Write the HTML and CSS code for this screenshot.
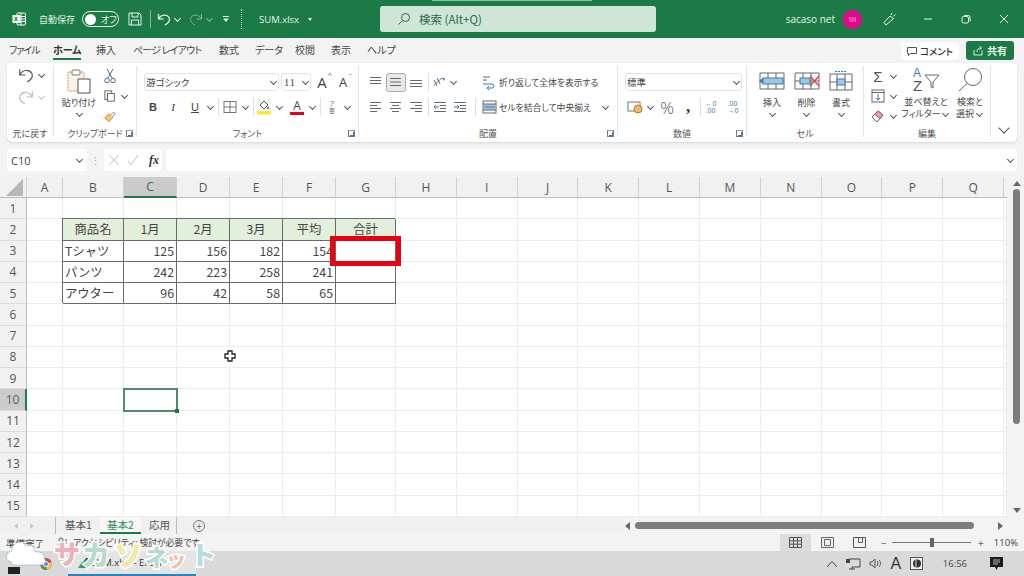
FILE: index.html
```html
<!DOCTYPE html>
<html lang="ja">
<head>
<meta charset="utf-8">
<title>SUM.xlsx - Excel</title>
<link rel="stylesheet" href="styles.css">
</head>
<body>
<div class="app">
  <header class="titlebar">
    <svg class="t-xl" width="14" height="14" viewBox="0 0 14 14"><rect x="5" y="1" width="8.5" height="12" rx="1" fill="none" stroke="#fff"/><path d="M5 4.5h8.5M5 7h8.5M5 9.5h8.5M9 1v12" stroke="#fff"/><rect x="0.5" y="3" width="7.5" height="8" fill="#fff"/><path d="M2.5 5l3 4M5.5 5l-3 4" stroke="#1b7a45" stroke-width="1.2"/></svg>
    <span class="t-auto">自動保存</span>
    <span class="toggle"><b></b><em>オフ</em></span>
    <svg class="t-save" width="14" height="14" viewBox="0 0 14 14" fill="none" stroke="#e8f3ec"><path d="M1 1h10l2 2v10H1z"/><path d="M4 1v4h6V1M3.500 13V8h7v5"/></svg>
    <span class="t-sep"></span>
    <svg class="t-undo" width="14" height="14" viewBox="0 0 14 14" fill="none" stroke="#fff" stroke-width="1.2"><path d="M1.500 2v5h5M1.800 6.800C4 2 10 2 12 5.500c1.300 2.500-.5 5.500-4 7.500"/></svg>
    <span class="car s12 light"></span>
    <svg class="t-redo" width="14" height="14" viewBox="0 0 14 14" fill="none" stroke="#7fb698"><path d="M12.500 2v5h-5M12.200 6.800C10 2 4 2 2 5.500c-1.300 2.500.5 5.500 4 7.500"/></svg>
    <span class="car s12 dim"></span>
    <svg class="t-cust" width="8" height="8" viewBox="0 0 8 8" fill="#e8f3ec"><path d="M1 1h6v1H1zM1 3.500h6L4 7z"/></svg>
    <span class="t-dots"></span>
    <span class="t-file">SUM.xlsx</span>
    <span class="t-filecar"></span>
    <div class="searchbox">
      <svg width="14" height="14" viewBox="0 0 14 14" fill="none" stroke="#2d6a49"><circle cx="8.500" cy="5.500" r="4"/><path d="M5.500 8.500L1.500 12.500"/></svg>
      <span>検索 (Alt+Q)</span>
    </div>
    <div class="t-right">
      <span class="t-user">sacaso net</span>
      <span class="avatar">SN</span>
      <svg class="t-pen" width="14" height="14" viewBox="0 0 14 14" fill="none" stroke="#e8f3ec"><path d="M3 13L1 10.500 7 4l3.500 2.500zM8 3l1-2M10.500 4l2-1.500"/></svg>
      <svg class="t-win" width="10" height="10" viewBox="0 0 10 10" stroke="#e8f3ec" fill="none"><path d="M1 5h8"/></svg>
      <svg class="t-win" width="10" height="10" viewBox="0 0 10 10" stroke="#e8f3ec" fill="none"><rect x="1" y="2.500" width="6.500" height="6.500" rx="1.500"/><path d="M3 1.500h4.500a1.500 1.500 0 0 1 1.500 1.500v4.500"/></svg>
      <svg class="t-win" width="10" height="10" viewBox="0 0 10 10" stroke="#e8f3ec" fill="none"><path d="M1 1l8 8M9 1L1 9"/></svg>
    </div>
  </header>

  <nav class="tabs">
    <span class="tab t1">ファイル</span>
    <span class="tab t2 on">ホーム</span>
    <span class="tab t3">挿入</span>
    <span class="tab t4">ページ レイアウト</span>
    <span class="tab t5">数式</span>
    <span class="tab t6">データ</span>
    <span class="tab t7">校閲</span>
    <span class="tab t8">表示</span>
    <span class="tab t9">ヘルプ</span>
    <span class="btn-comment"><svg width="10" height="10" viewBox="0 0 10 10" fill="none" stroke="#555"><path d="M.5 1.500h9v6h-6L1.500 9.500v-2h-1z"/></svg>コメント</span>
    <span class="btn-share"><svg width="11" height="11" viewBox="0 0 11 11" fill="none" stroke="#d8efe1"><path d="M1 5v5h8V5M4 7c0-3 2-4 4-4M6.500 1L8.500 3 6.500 5"/></svg>共有</span>
  </nav>

  <section class="ribbon">
    <div class="grp g1">
      <div class="undo-col">
        <div class="row"><svg class="s16" width="16" height="16" viewBox="0 0 14 14" fill="none" stroke="#555"><path d="M1.500 2v5h5M1.800 6.800C4 2 10 2 12 5.500c1.300 2.500-.5 5.500-4 7.500"/></svg><span class="car s14"></span></div>
        <div class="row"><svg class="s16" width="16" height="16" viewBox="0 0 14 14" fill="none" stroke="#bbb"><path d="M12.500 2v5h-5M12.200 6.800C10 2 4 2 2 5.500c-1.300 2.500.5 5.500 4 7.500"/></svg><span class="car s14 dim2"></span></div>
      </div>
      <span class="glabel">元に戻す</span>
    </div>

    <div class="grp g2">
      <div class="cols">
        <div class="bigcol w50 up4">
          <svg width="24" height="25" viewBox="0 0 24 25"><rect x="1" y="3" width="16" height="19" rx="1" fill="#fdf3e6" stroke="#d98e3e" stroke-dasharray="2 1"/><rect x="5" y="1" width="8" height="5" rx="1" fill="#fff" stroke="#777"/><rect x="11" y="10" width="12" height="14" fill="#fff" stroke="#555"/></svg>
          <span class="btxt mt3">貼り付け</span>
          <span class="car h8"></span>
        </div>
        <div class="smallcol">
          <div class="row r20"><svg class="s12" width="12" height="16" viewBox="0 0 12 16" fill="none" stroke="#4a6d8a"><path d="M3 1l5 9M9 1L4 10"/><circle cx="3" cy="12.500" r="2.300"/><circle cx="9" cy="12.500" r="2.300"/></svg></div>
          <div class="row r20"><svg class="s12" width="14" height="14" viewBox="0 0 14 14" fill="#fff" stroke="#555"><rect x="1" y="1" width="8" height="10"/><rect x="4" y="4" width="8" height="9"/></svg><span class="car s16"></span></div>
          <div class="row r20"><svg class="s12" width="15" height="15" viewBox="0 0 15 15"><path d="M1 9l5-5 5 5-5 5z" fill="#f5c46b" stroke="#c47a1e"/><path d="M8 6l4-4 2 2-4 4" fill="#fff" stroke="#666"/></svg></div>
        </div>
      </div>
      <span class="glabel">クリップボード</span>
      <span class="launch"></span>
    </div>

    <div class="grp g3">
      <div class="rows">
        <div class="row">
          <span class="select w135"><span>游ゴシック</span><span class="car s8"></span></span>
          <span class="select w30 ml2"><span class="latin">11</span><span class="car s8"></span></span>
          <span class="slot s22 gl-a big">A<sup class="up">^</sup></span>
          <span class="slot s20 gl-a">A<sup class="dn">ˇ</sup></span>
        </div>
        <div class="row">
          <span class="slot s18 gl-b">B</span>
          <span class="slot s22 gl-i">I</span>
          <span class="slot s22 gl-u">U</span>
          <span class="car s8"></span>
          <span class="sep s8"></span>
          <svg class="s16" width="16" height="14" viewBox="0 0 16 14" fill="none" stroke="#777"><rect x="2" y="1.500" width="12" height="11"/><path d="M8 1.500v11M2 7h12"/></svg>
          <span class="car s14"></span>
          <span class="sep s2"></span>
          <svg class="s20" width="20" height="16" viewBox="0 0 20 16"><path d="M6 6l4-4 4 4-4 4z" fill="#fff" stroke="#555"/><path d="M14 7l1.500 3-3 0z" fill="#4a7ba6"/><rect x="3" y="12" width="14" height="3.500" fill="#ffe92e"/></svg>
          <span class="car s10"></span>
          <span class="slot s26 gl-fc">A</span>
          <span class="car s4"></span>
          <span class="sep s12"></span>
          <span class="slot s12 gl-ruby">ア<br>亜</span>
          <span class="car s18"></span>
        </div>
      </div>
      <span class="glabel">フォント</span>
      <span class="launch"></span>
    </div>

    <div class="grp g4">
      <div class="rows">
        <div class="row">
          <svg class="s19" width="19" height="14" viewBox="0 0 19 14" stroke="#666"><path d="M4 2.500h11M4 5.500h11M4 8.500h11"/></svg>
          <span class="slot s21"><span class="pressed"><svg width="15" height="10" viewBox="0 0 15 10" stroke="#666"><path d="M2 1.500h11M2 5h11M2 8.500h11"/></svg></span></span>
          <svg class="s20" width="20" height="14" viewBox="0 0 20 14" stroke="#666"><path d="M4 5.500h12M4 8.500h12M4 11.500h12"/></svg>
          <span class="sep s4"></span>
          <svg class="s20" width="20" height="14" viewBox="0 0 20 14" fill="none"><path d="M4 10L12 3" stroke="#4a7ba6"/><path d="M4 5l3 6M7 3l3 6" stroke="#666"/><path d="M12 3l3 0-1 3z" fill="#4a7ba6"/></svg>
          <span class="car s6"></span>
          <span class="sp24"></span>
          <svg class="s19" width="19" height="15" viewBox="0 0 19 15" fill="none"><path d="M3 2h7M3 5h4" stroke="#666"/><path d="M3 9h9a2 2 0 0 1 0 4H8M9 11l-2 2 2 2" stroke="#3a7bb0"/></svg>
          <span class="rtxt">折り返して全体を表示する</span>
        </div>
        <div class="row">
          <svg class="s19" width="19" height="14" viewBox="0 0 19 14" stroke="#666"><path d="M4 2.500h11M4 5.500h7M4 8.500h11M4 11.500h7"/></svg>
          <svg class="s21" width="21" height="14" viewBox="0 0 21 14" stroke="#666"><path d="M5 2.500h11M7 5.500h7M5 8.500h11M7 11.500h7"/></svg>
          <svg class="s20" width="20" height="14" viewBox="0 0 20 14" stroke="#666"><path d="M4 2.500h12M9 5.500h7M4 8.500h12M9 11.500h7"/></svg>
          <span class="sep s4"></span>
          <svg class="s20" width="20" height="14" viewBox="0 0 20 14" fill="none"><path d="M4 2.500h12M10 5.500h6M10 8.500h6M4 11.500h12" stroke="#666"/><path d="M9 7H4M6 5L4 7l2 2" stroke="#3a7bb0"/></svg>
          <svg class="s21" width="21" height="14" viewBox="0 0 21 14" fill="none"><path d="M4 2.500h12M10 5.500h6M10 8.500h6M4 11.500h12" stroke="#666"/><path d="M4 7h5M7 5l2 2-2 2" stroke="#3a7bb0"/></svg>
          <span class="sep s9"></span>
          <svg class="s19" width="19" height="14" viewBox="0 0 19 14"><rect x="3" y="1" width="13" height="12" fill="#fff" stroke="#666"/><rect x="4" y="4" width="11" height="6" fill="#9cc7e6"/><path d="M4 7h11" stroke="#3a7bb0"/><path d="M3 4h13M3 10h13" stroke="#666"/></svg>
          <span class="rtxt">セルを結合して中央揃え</span>
          <span class="car s24"></span>
        </div>
      </div>
      <span class="glabel">配置</span>
      <span class="launch"></span>
    </div>

    <div class="grp g5">
      <div class="rows">
        <div class="row"><span class="select w117"><span>標準</span><span class="car s8"></span></span></div>
        <div class="row">
          <svg class="s20" width="20" height="14" viewBox="0 0 20 14"><rect x="3" y="2" width="12" height="9" fill="#fff" stroke="#777"/><circle cx="13" cy="9" r="4" fill="#f2b56b" stroke="#c47a1e"/></svg>
          <span class="car s10"></span>
          <span class="slot s24 gl-pc">%</span>
          <span class="slot s18 gl-cm">,</span>
          <span class="sep s6"></span>
          <span class="slot s16 gl-dec">←0<br>.00</span>
          <span class="slot s28 gl-dec">.00<br>→0</span>
        </div>
      </div>
      <span class="glabel">数値</span>
      <span class="launch"></span>
    </div>

    <div class="grp g6">
      <div class="cols">
        <div class="bigcol w34 up2">
          <svg width="26" height="20" viewBox="0 0 26 20" fill="none"><path d="M1 2h24v16H1zM1 10h24M9 2v16M17 2v16" stroke="#666"/><rect x="4" y="7" width="20" height="6" fill="#9cc7e6" stroke="#3a7bb0"/><path d="M0 10l4-3v6z" fill="#3a7bb0"/></svg>
          <span class="btxt mt6">挿入</span><span class="car h8"></span>
        </div>
        <div class="bigcol w35 up2">
          <svg width="26" height="20" viewBox="0 0 26 20" fill="none"><path d="M1 2h24v16H1zM1 10h24M9 2v16M17 2v16" stroke="#666"/><rect x="6" y="7" width="10" height="6" fill="#9cc7e6" stroke="#3a7bb0"/><path d="M16 5l9 10M25 5l-9 10" stroke="#d8413a" stroke-width="1.300"/></svg>
          <span class="btxt mt6">削除</span><span class="car h8"></span>
        </div>
        <div class="bigcol w34 up2">
          <svg width="24" height="20" viewBox="0 0 24 20" fill="none"><path d="M1 3h22v16H1zM1 11h22M8 3v16M16 3v16" stroke="#666"/><rect x="8" y="8" width="8" height="6" fill="#9cc7e6" stroke="#3a7bb0"/><path d="M6 0.500h12" stroke="#3a7bb0" stroke-dasharray="2 1"/></svg>
          <span class="btxt mt6">書式</span><span class="car h8"></span>
        </div>
      </div>
      <span class="glabel">セル</span>
    </div>

    <div class="grp g7">
      <div class="cols">
        <div class="smallcol">
          <div class="row r20"><span class="slot s14 gl-sum">Σ</span><span class="car s16"></span></div>
          <div class="row r20"><svg class="s14" width="14" height="14" viewBox="0 0 14 14" fill="none"><rect x="1" y="1" width="12" height="12" stroke="#666"/><path d="M1 3.500h12" stroke="#666"/><path d="M7 5v6M5 9l2 2 2-2" stroke="#3a7bb0"/></svg><span class="car s16"></span></div>
          <div class="row r20"><svg class="s14" width="14" height="14" viewBox="0 0 14 14"><path d="M1 8l6-6 5 4-6 7z" fill="#fff" stroke="#666"/><path d="M4 5.500l3-3.500 5 4-3 3.500z" fill="#e89ac0" stroke="#b0447e"/></svg><span class="car s16"></span></div>
        </div>
        <div class="bigcol w50 up8">
          <svg width="32" height="28" viewBox="0 0 32 28" fill="none"><text x="3" y="12" class="sort-a">A</text><text x="3" y="26" class="sort-z">Z</text><path d="M15 10h14l-6 7v6l-2-1v-5z" stroke="#666"/></svg>
          <span class="btxt mt3">並べ替えと</span>
          <span class="btxt">フィルター<i class="car s10"></i></span>
        </div>
        <div class="bigcol w38 up8">
          <svg width="28" height="28" viewBox="0 0 28 28" fill="none" stroke="#666"><circle cx="17" cy="12" r="8.500"/><path d="M11 18.500L3 26"/></svg>
          <span class="btxt mt3">検索と</span>
          <span class="btxt">選択<i class="car s10"></i></span>
        </div>
      </div>
      <span class="glabel">編集</span>
    </div>
    <div class="g8"><span class="car big-car"></span></div>
  </section>

  <div class="fbar">
    <div class="namebox"><span>C10</span><span class="car s8"></span></div>
    <span class="fdots">⋮</span>
    <div class="fxbox">
      <svg width="12" height="12" viewBox="0 0 12 12" stroke="#c4c4c4" fill="none"><path d="M1 1l10 10M11 1L1 11"/></svg>
      <svg width="12" height="12" viewBox="0 0 12 12" stroke="#c4c4c4" fill="none"><path d="M1 7l3 4 7-10"/></svg>
      <span>fx</span>
    </div>
    <div class="finput"><span class="car s8"></span></div>
  </div>

  <main class="sheetwrap">
    <div class="sheet">
      <span class="hd corner"><svg width="18" height="17" viewBox="0 0 18 17"><path d="M17 0v17H0z" fill="#b7b7b7"/></svg></span><span class="hd">A</span><span class="hd">B</span><span class="hd hsel">C</span><span class="hd">D</span><span class="hd">E</span><span class="hd">F</span><span class="hd">G</span><span class="hd">H</span><span class="hd">I</span><span class="hd">J</span><span class="hd">K</span><span class="hd">L</span><span class="hd">M</span><span class="hd">N</span><span class="hd">O</span><span class="hd">P</span><span class="hd">Q</span><span class="hd end"></span>

      <span class="rh">1</span><span></span><span></span><span></span><span></span><span></span><span></span><span></span><span></span><span></span><span></span><span></span><span></span><span></span><span></span><span></span><span></span><span></span><span></span>

      <span class="rh">2</span><span></span><span class="t th">商品名</span><span class="t th">1月</span><span class="t th">2月</span><span class="t th">3月</span><span class="t th">平均</span><span class="t th">合計</span><span></span><span></span><span></span><span></span><span></span><span></span><span></span><span></span><span></span><span></span><span></span>

      <span class="rh">3</span><span></span><span class="t">Tシャツ</span><span class="t n">125</span><span class="t n">156</span><span class="t n">182</span><span class="t n">154</span><span class="t"></span><span></span><span></span><span></span><span></span><span></span><span></span><span></span><span></span><span></span><span></span><span></span>

      <span class="rh">4</span><span></span><span class="t">パンツ</span><span class="t n">242</span><span class="t n">223</span><span class="t n">258</span><span class="t n">241</span><span class="t"></span><span></span><span></span><span></span><span></span><span></span><span></span><span></span><span></span><span></span><span></span><span></span>

      <span class="rh">5</span><span></span><span class="t">アウター</span><span class="t n">96</span><span class="t n">42</span><span class="t n">58</span><span class="t n">65</span><span class="t"></span><span></span><span></span><span></span><span></span><span></span><span></span><span></span><span></span><span></span><span></span><span></span>

      <span class="rh">6</span><span></span><span></span><span></span><span></span><span></span><span></span><span></span><span></span><span></span><span></span><span></span><span></span><span></span><span></span><span></span><span></span><span></span><span></span>

      <span class="rh">7</span><span></span><span></span><span></span><span></span><span></span><span></span><span></span><span></span><span></span><span></span><span></span><span></span><span></span><span></span><span></span><span></span><span></span><span></span>

      <span class="rh">8</span><span></span><span></span><span></span><span></span><span></span><span></span><span></span><span></span><span></span><span></span><span></span><span></span><span></span><span></span><span></span><span></span><span></span><span></span>

      <span class="rh">9</span><span></span><span></span><span></span><span></span><span></span><span></span><span></span><span></span><span></span><span></span><span></span><span></span><span></span><span></span><span></span><span></span><span></span><span></span>

      <span class="rh rsel">10</span><span></span><span></span><span class="sel"></span><span></span><span></span><span></span><span></span><span></span><span></span><span></span><span></span><span></span><span></span><span></span><span></span><span></span><span></span><span></span>

      <span class="rh">11</span><span></span><span></span><span></span><span></span><span></span><span></span><span></span><span></span><span></span><span></span><span></span><span></span><span></span><span></span><span></span><span></span><span></span><span></span>

      <span class="rh">12</span><span></span><span></span><span></span><span></span><span></span><span></span><span></span><span></span><span></span><span></span><span></span><span></span><span></span><span></span><span></span><span></span><span></span><span></span>

      <span class="rh">13</span><span></span><span></span><span></span><span></span><span></span><span></span><span></span><span></span><span></span><span></span><span></span><span></span><span></span><span></span><span></span><span></span><span></span><span></span>

      <span class="rh">14</span><span></span><span></span><span></span><span></span><span></span><span></span><span></span><span></span><span></span><span></span><span></span><span></span><span></span><span></span><span></span><span></span><span></span><span></span>

      <span class="rh">15</span><span></span><span></span><span></span><span></span><span></span><span></span><span></span><span></span><span></span><span></span><span></span><span></span><span></span><span></span><span></span><span></span><span></span><span></span>
    </div>
    <div class="vscroll"><span class="arr-up"></span><span class="vthumb"></span><span class="arr-dn"></span></div>
    <div class="redbox"></div>
    <svg class="cursor" width="12" height="12" viewBox="0 0 12 12"><path d="M4 1h4v3h3v4H8v3H4V8H1V4h3z" fill="#fff" stroke="#222" stroke-width="1.300"/></svg>
  </main>

  <div class="sheettabs">
    <span class="navarrow l"></span><span class="navarrow r"></span>
    <span class="stab first">基本1</span>
    <span class="stab active">基本2</span>
    <span class="stab last">応用</span>
    <span class="addsheet">+</span>
    <div class="hscroll"><span class="arr-l"></span><span class="hthumb"></span><span class="arr-r"></span></div>
  </div>

  <footer class="status">
    <span class="st-ready">準備完了</span>
    <svg class="st-icon" width="12" height="12" viewBox="0 0 12 12" fill="none" stroke="#555"><circle cx="4" cy="3" r="2"/><path d="M1 8c1-2 5-2 6 0M3 8v3M5 8v3"/><path d="M9 2v5M9 9v1" stroke="#555"/></svg>
    <span class="st-acc">アクセシビリティ: 検討が必要です</span>
    <div class="st-right">
      <span class="view on"><svg width="13" height="11" viewBox="0 0 13 11" fill="none" stroke="#555"><path d="M.5.500h12v10H.5zM.5 3.800h12M.5 7.200h12M4.500.500v10M8.500.500v10"/></svg></span>
      <span class="view"><svg width="13" height="11" viewBox="0 0 13 11" fill="none" stroke="#666"><path d="M.5.500h12v10H.5z"/><path d="M3.500 2.500h6v6h-6z"/></svg></span>
      <span class="view"><svg width="13" height="11" viewBox="0 0 13 11" fill="none" stroke="#555"><path d="M.5.500h12v10H.5zM5.500.500v5h4v-5"/></svg></span>
      <span class="zm">−</span>
      <span class="slider"><b></b></span>
      <span class="zm">+</span>
      <span class="zoompc">110%</span>
    </div>
  </footer>

  <div class="taskbar">
    <span class="task-start"></span>
    <svg class="task-chrome" width="12" height="12" viewBox="0 0 12 12"><circle cx="6" cy="6" r="6" fill="#d9463c"/><path d="M6 6L1 9a6 6 0 0 0 6 3z" fill="#3aa757"/><path d="M6 6l5.500-2A6 6 0 0 1 7 12z" fill="#f6c344"/><circle cx="6" cy="6" r="2.500" fill="#4a8be0" stroke="#fff"/></svg>
    <div class="task-item">
      <svg width="10" height="11" viewBox="0 0 10 11"><path d="M1 11L8 1l2 0v10z" fill="#1e6d41"/><path d="M0 11l4-6 3 6z" fill="#3f9b66"/></svg>
      <span>SUM.xlsx - Excel</span>
    </div>
    <div class="tray">
      <svg width="12" height="8" viewBox="0 0 12 8" fill="none" stroke="#444"><path d="M1 7l5-5.500L11 7"/></svg>
      <svg width="15" height="12" viewBox="0 0 15 12" fill="none" stroke="#444"><path d="M3 1h11v8H6M3 11h6M6 9v2"/><rect x="0.500" y="1.500" width="3" height="3" fill="#444"/></svg>
      <svg width="13" height="11" viewBox="0 0 13 11" fill="none" stroke="#555"><path d="M1 4h2l3-3v9L3 7H1zM8 3c1 1 1 4 0 5M10 2c2 2 2 5 0 7"/></svg>
      <span class="tray-a">A</span>
      <svg width="13" height="13" viewBox="0 0 13 13"><rect x=".5" y=".5" width="12" height="12" fill="#eee" stroke="#555"/><circle cx="7" cy="6.500" r="4" fill="#333"/><path d="M6 3v7" stroke="#ddd"/></svg>
      <span class="clock">16:56</span>
      <svg width="13" height="14" viewBox="0 0 13 14"><path d="M0 0h13v10H8l-1.500 3L5 10H0z" fill="#1c1c1c"/><path d="M3 3h7M3 5h7M3 7h5" stroke="#ddd" stroke-width=".8"/></svg>
    </div>
  </div>

  <div class="wm">
    <svg class="wm-cloud" width="44" height="34" viewBox="0 0 44 34"><path d="M6 25C0 24 0 15 7 14 6 5 18 2 21 9c5-2 9 1 9 6 6-1 10 3 9 6 3 3 1 7-3 7H9c-2 0-3-1-3-3z" fill="#fff" stroke="#7fb7dc" stroke-dasharray="1.500 1"/></svg>
    <span class="wm-c c1">サ</span>
    <span class="wm-c c2">カ</span>
    <span class="wm-c c3">ソ</span>
    <span class="wm-c c4">ネ</span>
    <span class="wm-c c5">ッ</span>
    <span class="wm-c c6">ト</span>
  </div>

  <span class="topline"></span>
</div>
</body>
</html>
```

FILE: styles.css
```css
* { box-sizing: border-box; }
html, body { margin: 0; padding: 0; }
body {
  width: 1024px; height: 576px; overflow: hidden;
  font-family: "Noto Sans CJK JP", "Noto Sans", sans-serif;
  font-feature-settings: "palt";
  color: #444;
  background: #f3f3f3;
}
.app { position: relative; width: 1024px; height: 576px; display: flex; flex-direction: column; overflow: hidden; }
svg { display: block; flex: none; }

/* title bar */
.titlebar { height: 38px; flex: none; background: #1b7a45; display: flex; align-items: center; color: #e6f2ea; padding-left: 12px; }
.t-auto { margin-left: 13px; width: 38px; font-size: 9px; white-space: nowrap; }
.toggle { margin-left: 5px; width: 37px; height: 16px; border: 1px solid #e6f2ea; border-radius: 8px; display: flex; align-items: center; padding-left: 2px; font-size: 9px; }
.toggle b { width: 11px; height: 11px; border-radius: 50%; background: #fff; }
.toggle em { font-style: normal; margin-left: 5px; }
.t-save { margin-left: 9px; }
.t-sep { width: 1px; height: 18px; background: #7fb698; margin: 0 6px 0 8px; }
.t-redo { margin-left: 6px; }
.t-cust { margin-left: 7px; }
.t-dots { width: 0; height: 20px; border-left: 1px dotted #b7d7c4; margin-left: 11px; }
.t-file { margin-left: 17px; font-family: "Open Sans", sans-serif; font-size: 9.500px; width: 43px; white-space: nowrap; }
.t-filecar { margin-left: 6px; border: 2.500px solid transparent; border-top: 3px solid #e6f2ea; border-bottom: 0; }
.searchbox { margin-left: 68px; width: 276px; height: 26px; border-radius: 3px; background: #cfe5d8; display: flex; align-items: center; padding-left: 17px; font-size: 11.500px; color: #2d6a49; gap: 8px; }
.t-right { margin-left: auto; display: flex; align-items: center; padding-right: 15px; }
.t-user { font-family: "Open Sans", sans-serif; font-size: 10px; color: #e6f2ea; }
.avatar { margin-left: 8px; width: 19px; height: 19px; border-radius: 50%; background: #e2068c; color: #f7b5dc; font-size: 6px; display: flex; align-items: center; justify-content: center; }
.t-pen { margin-left: 21px; }
.t-win { margin-left: 28px; }
.t-pen + .t-win { margin-left: 26px; }
.topline { position: absolute; left: 432px; top: 0; width: 160px; height: 1px; background: #8fc0a4; }

/* tabs */
.tabs { height: 25px; flex: none; display: flex; align-items: center; font-size: 10px; color: #444; position: relative; padding-left: 9px; }
.tab { white-space: nowrap; height: 25px; line-height: 24px; }
.t1 { width: 44px; letter-spacing: -1px; }
.t2 { width: 43px; font-weight: 700; position: relative; color: #333; }
.t2::after { content: ""; position: absolute; left: 0; width: 28px; bottom: 3px; height: 2px; background: #1b7a45; }
.t3 { width: 37px; }
.t4 { width: 86px; letter-spacing: -.8px; }
.t5 { width: 36px; }
.t6 { width: 40px; }
.t7 { width: 36px; }
.t8 { width: 36px; }
.t9 { width: 40px; }
.btn-comment { margin-left: auto; width: 58px; height: 18px; background: #fff; border-radius: 3px; display: flex; align-items: center; justify-content: center; gap: 3px; font-size: 9.500px; font-weight: 500; color: #333; margin-right: 7px; }
.btn-share { width: 48px; height: 19px; background: #1b7a45; color: #e6f2ea; border-radius: 3px; display: flex; align-items: center; justify-content: center; gap: 3px; font-size: 10px; font-weight: 700; margin-right: 10px; }

/* ribbon */
.ribbon { flex: none; height: 79px; margin: 0 7px; background: #fff; border-radius: 5px; display: flex; box-shadow: 0 1px 2px rgba(0,0,0,.12); }
.grp { position: relative; margin: 3px 0 5px; padding-top: 7px; border-right: 1px solid #e4e4e4; display: flex; flex-direction: column; flex: none; }
.g1 { width: 47px; }
.g2 { width: 83px; }
.g3 { width: 222px; padding-left: 7px; }
.g4 { width: 259px; padding-left: 7px; }
.g5 { width: 129px; padding-left: 7px; }
.g6 { width: 117px; padding-left: 8px; }
.g7 { width: 127px; padding-left: 7px; }
.g8 { flex: 1; display: flex; align-items: flex-end; justify-content: center; padding-bottom: 9px; }
.glabel { position: absolute; left: 0; right: 0; bottom: -3px; height: 12px; line-height: 12px; text-align: center; font-size: 9px; color: #555; }
.launch { position: absolute; right: 3px; bottom: 0; width: 7px; height: 7px; border: 1px solid #777; border-top-color: #999; }
.launch::after { content: ""; position: absolute; right: 0; bottom: 0; width: 3px; height: 3px; border-right: 1px solid #3a7bb0; border-bottom: 1px solid #3a7bb0; }

.rows { display: flex; flex-direction: column; gap: 7px; }
.row { display: flex; align-items: center; height: 18px; }
.cols { display: flex; }
.undo-col { margin-top: -7px; padding-left: 11px; display: flex; flex-direction: column; gap: 4px; }
.bigcol { display: flex; flex-direction: column; align-items: center; flex: none; }
.smallcol { margin-top: -7px; display: flex; flex-direction: column; }
.r20 { height: 20px; }
.up2 { margin-top: -2px; }
.up4 { margin-top: -4px; }
.up8 { margin-top: -8px; }
.w34 { width: 34px; } .w35 { width: 35px; } .w38 { width: 38px; } .w50 { width: 50px; }
.w117 { width: 117px; } .w135 { width: 135px; } .w30 { width: 30px; }
.ml2 { margin-left: 2px; }
.mt3 { margin-top: 3px; } .mt6 { margin-top: 6px; }
.btxt { font-size: 9px; line-height: 12px; color: #444; white-space: nowrap; display: flex; align-items: center; }
.rtxt { font-size: 8.800px; white-space: nowrap; color: #444; width: 104px; }
.rtxt + .car { margin-left: -10px; }
.h8 { height: 8px; margin-top: 1px; }

.s2 { width: 2px; } .s4 { width: 4px; } .s6 { width: 6px; } .s8 { width: 8px; } .s9 { width: 9px; } .s10 { width: 10px; }
.s12 { width: 12px; } .s14 { width: 14px; } .s16 { width: 16px; } .s18 { width: 18px; } .s19 { width: 19px; }
.s20 { width: 20px; } .s21 { width: 21px; } .s22 { width: 22px; } .s24 { width: 24px; } .s26 { width: 26px; } .s28 { width: 28px; }
.sp24 { width: 24px; flex: none; }
.slot { display: flex; align-items: center; justify-content: center; flex: none; position: relative; }

.car { display: flex; align-items: center; justify-content: center; flex: none; font-style: normal; }
.car::after { content: ""; width: 4px; height: 4px; border-right: 1px solid #555; border-bottom: 1px solid #555; transform: translateY(-1px) rotate(45deg); flex: none; }
.car.light::after { border-color: #e6f2ea; }
.car.dim::after { border-color: #7fb698; }
.car.dim2::after { border-color: #c4c4c4; }
.big-car::after { width: 7px; height: 7px; }
.sep { display: flex; justify-content: center; align-items: center; flex: none; height: 18px; }
.sep::after { content: ""; width: 1px; height: 18px; background: #e0e0e0; flex: none; }

.select { height: 18px; border: 1px solid #e2e2e2; border-radius: 3px; display: flex; align-items: center; justify-content: space-between; padding: 0 1px; font-size: 9.500px; color: #444; flex: none; }
.latin { font-family: "Liberation Serif", serif; font-size: 10.500px; padding-left: 1px; letter-spacing: 1px; }
.gl-a { font-size: 13px; color: #444; font-family: "Open Sans", sans-serif; }
.gl-a.big { font-size: 15px; }
.gl-a sup { position: absolute; top: -1px; right: 1px; font-size: 8px; line-height: 8px; color: #3a7bb0; }
.gl-b { font-size: 11px; font-weight: 700; font-family: "Liberation Sans", sans-serif; }
.gl-i { font-size: 11px; font-style: italic; font-family: "Liberation Serif", serif; }
.gl-u { font-size: 11px; text-decoration: underline; font-family: "Liberation Sans", sans-serif; }
.gl-fc { font-size: 12px; line-height: 13px; font-family: "Open Sans", sans-serif; color: #444; height: 16px; align-items: flex-start; }
.gl-fc::after { content: ""; position: absolute; left: 6px; bottom: 0; width: 14px; height: 3px; background: #e1001e; }
.gl-ruby { font-size: 6px; line-height: 7px; text-align: center; flex-direction: column; color: #777; }
.pressed { width: 20px; height: 19px; border: 1px solid #aaa; border-radius: 3px; background: #e9e9e9; display: flex; align-items: center; justify-content: center; }
.gl-pc { font-size: 17px; color: #555; font-family: "Open Sans", sans-serif; font-weight: 300; }
.gl-cm { font-size: 17px; font-weight: 800; line-height: 10px; color: #333; font-family: "Liberation Serif", serif; }
.gl-dec { flex-direction: column; font-size: 7px; line-height: 7px; color: #3a7bb0; font-family: "Liberation Sans", sans-serif; }
.gl-sum { font-size: 15px; color: #555; font-family: "Liberation Sans", sans-serif; }
.sort-a { font: 12px "Liberation Sans", sans-serif; fill: #3a7bb0; }
.sort-z { font: 15px "Liberation Sans", sans-serif; fill: #555; }

/* formula bar */
.fbar { flex: none; height: 22px; margin-top: 7px; padding: 0 7px; display: flex; align-items: stretch; font-size: 11px; }
.namebox { width: 80px; background: #fff; border-radius: 3px; display: flex; align-items: center; justify-content: space-between; padding: 0 4px; color: #444; font-family: "Open Sans", sans-serif; font-size: 11px; }
.fdots { width: 17px; text-align: center; line-height: 22px; color: #aaa; font-size: 11px; }
.fxbox { width: 58px; background: #fff; border-radius: 3px; display: flex; align-items: center; gap: 7px; padding-left: 4px; }
.fxbox span { font: italic 700 12px "Liberation Serif", serif; color: #333; margin-left: 3px; }
.finput { margin-left: 4px; flex: 1; background: #fff; border-radius: 3px; display: flex; align-items: center; justify-content: flex-end; padding-right: 3px; }

/* sheet */
.sheetwrap { flex: none; height: 340px; margin-top: 6px; display: flex; position: relative; }
.sheet {
  width: 1007px; flex: none; background: #fff;
  display: grid;
  grid-template-columns: 27px 36px 61px repeat(4, 53px) 60px repeat(10, 60.800px) 3px;
  grid-template-rows: 21px repeat(15, 21.267px);
  font-feature-settings: normal;
  border-right: 1px solid #c8c8c8;
}
.sheet > span { border-right: 1px solid #ececec; border-bottom: 1px solid #ececec; font-size: 12.300px; display: flex; align-items: center; color: #444; min-width: 0; white-space: nowrap; }
.sheet > .hd { background: #f1f1f1; justify-content: center; border-right: 1px solid #d2d2d2; border-bottom: 1px solid #bdbdbd; font-family: "Open Sans", sans-serif; font-size: 12px; color: #555; }
.sheet > .corner { justify-content: flex-start; padding-left: 6px; padding-top: 1px; }
.sheet > .hsel { background: #cbcbcb; border-bottom: 2px solid #1b7a45; color: #3f6a52; }
.sheet > .end { border-right: 0; }
.sheet > .rh { background: #f1f1f1; justify-content: center; border-right: 1px solid #bdbdbd; border-bottom: 1px solid #dcdcdc; font-family: "Open Sans", sans-serif; font-size: 12px; color: #555; }
.sheet > .rsel { background: #cbcbcb; border-right: 2px solid #1b7a45; color: #3f6a52; }
.sheet > .t { position: relative; z-index: 1; border-right: 1px solid #6a6a6a; border-bottom: 1px solid #6a6a6a; box-shadow: -1px -1px 0 #6a6a6a; padding: 0 2px; }
.sheet > .th { background: #e2efda; justify-content: center; padding-bottom: 1px; }
.sheet > .n { justify-content: flex-end; }
.sheet > .sel { position: relative; z-index: 1; outline: 2px solid #4d8a68; outline-offset: -1px; }
.sheet > .sel::after { content: ""; position: absolute; right: -3px; bottom: -3px; width: 4px; height: 4px; background: #1b7a45; }

.vscroll { flex: 1; display: flex; flex-direction: column; align-items: center; padding: 4px 0 4px 1px; background: #f3f3f3; }
.arr-up { border: 4px solid transparent; border-bottom: 5px solid #666; border-top: 0; margin-left: 1px; }
.arr-dn { border: 4px solid transparent; border-top: 5px solid #666; border-bottom: 0; margin-top: auto; margin-left: 1px; }
.vthumb { width: 7px; height: 235px; margin-top: 3px; border-radius: 4px; background: #7d7d7d; margin-left: 1px; }
.redbox { position: absolute; left: 330px; top: 59px; width: 71px; height: 30px; border: 5px solid #e60012; z-index: 3; }
.cursor { position: absolute; left: 224px; top: 173px; z-index: 3; }

/* sheet tabs */
.sheettabs { flex: none; height: 17px; display: flex; align-items: center; font-size: 11px; background: #f0f0f0; position: relative; padding-left: 14px; }
.navarrow { width: 0; height: 0; border: 3px solid transparent; flex: none; }
.navarrow.l { border-right: 4px solid #c8c8c8; border-left: 0; }
.navarrow.r { border-left: 4px solid #c8c8c8; border-right: 0; margin-left: 12px; }
.stab { height: 17px; line-height: 16px; font-size: 10.500px; display: block; color: #555; white-space: nowrap; }
.stab.first { margin-left: 21px; border-left: 1px solid #bbb; padding-left: 9px; width: 45px; }
.stab.active { width: 41px; background: #f8f8f8; color: #2f8a5a; text-align: center; border-bottom: 2px solid #1b7a45; }
.stab.last { padding-left: 8px; width: 36px; border-right: 1px solid #bbb; }
.addsheet { margin-left: 16px; width: 12px; height: 12px; border: 1px solid #777; border-radius: 50%; display: flex; align-items: center; justify-content: center; font-size: 10px; line-height: 10px; color: #666; }
.hscroll { position: absolute; left: 624px; right: 0; top: 0; height: 17px; display: flex; align-items: center; padding-left: 1px; background: #f3f3f3; }
.arr-l { border: 4px solid transparent; border-right: 5px solid #666; border-left: 0; }
.hthumb { width: 339px; height: 7px; margin-left: 5px; border-radius: 4px; background: #7d7d7d; }
.arr-r { border: 4px solid transparent; border-left: 5px solid #666; border-right: 0; margin-left: 24px; }

/* status */
.status { flex: none; height: 17px; display: flex; align-items: center; font-size: 9.500px; padding-left: 6px; background: #f3f3f3; color: #444; }
.st-ready { width: 51px; }
.st-acc { margin-left: 4px; white-space: nowrap; font-size: 9px; letter-spacing: -.15px; }
.st-right { margin-left: auto; display: flex; align-items: center; height: 17px; padding-right: 6px; }
.view { width: 31px; height: 17px; display: flex; align-items: center; justify-content: center; margin-right: 1px; }
.view.on { background: #dcdcdc; }
.zm { width: 12px; text-align: center; font-size: 10px; color: #666; margin-left: 2px; }
.slider { position: relative; width: 79px; height: 1px; background: #777; margin: 0 2px; }
.slider b { position: absolute; left: 38px; top: -4px; width: 4px; height: 9px; background: #666; }
.zoompc { margin-left: 7px; font-family: "Open Sans", sans-serif; font-size: 9.500px; }

/* taskbar */
.taskbar { flex: 1; background: #d9d9d9; display: flex; align-items: center; position: relative; }
.task-start { width: 12px; height: 7px; background: #222; margin-left: 8px; margin-top: 14px; }
.task-chrome { margin-left: 20px; }
.task-item { margin-left: 16px; width: 128px; height: 25px; background: #e4e4e4; border-bottom: 2px solid #2a80c0; display: flex; align-items: center; padding-left: 10px; gap: 3px; font-size: 9.500px; font-family: "Open Sans", sans-serif; color: #333; white-space: nowrap; }
.tray { margin-left: auto; display: flex; align-items: center; gap: 8px; padding-right: 21px; color: #444; }
.tray-a { font: 16px "Liberation Sans", sans-serif; width: 12px; text-align: center; color: #333; }
.clock { font: 9.500px "Open Sans", sans-serif; margin: 0 15px 0 12px; }

/* watermark */
.wm { position: absolute; left: 0; top: 0; pointer-events: none; z-index: 5; }
.wm-cloud { position: absolute; left: 5px; top: 537px; }
.wm-c { position: absolute; font-weight: 900; line-height: 1; -webkit-text-stroke: 3px #fff; paint-order: stroke fill; white-space: nowrap; font-feature-settings: normal; }
.c1 { left: 54px; top: 540px; font-size: 26px; color: #f0b0b8; }
.c2 { left: 82px; top: 540px; font-size: 28px; color: #b6dccf; }
.c3 { left: 114px; top: 540px; font-size: 29px; color: #f2e9a6; }
.c4 { left: 145px; top: 545px; font-size: 23px; color: #b6dccf; }
.c5 { left: 166px; top: 549px; font-size: 20px; color: #f2c2ae; }
.c6 { left: 190px; top: 541px; font-size: 26px; color: #b6dce2; }
```
